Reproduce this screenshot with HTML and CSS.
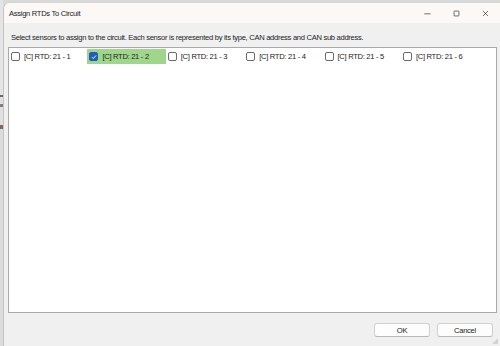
FILE: index.html
```html
<!DOCTYPE html>
<html lang="en">

<head>
    <meta charset="UTF-8">
    <title>Assign RTDs To Circuit</title>
    <link rel="stylesheet" href="styles.css">
</head>

<body>
    <div class="desktop-edge"></div>
    <div class="window">
        <div class="titlebar">
            <span class="title">Assign RTDs To Circuit</span>
            <div class="controls">
                <span class="ctl">
                    <svg width="10" height="10" viewBox="0 0 10 10"><path d="M0.5 5.5h9" stroke="#333" stroke-width="1"/></svg>
                </span>
                <span class="ctl">
                    <svg width="10" height="10" viewBox="0 0 10 10"><rect x="1.5" y="1.5" width="7" height="7" rx="1" fill="none" stroke="#333" stroke-width="1"/></svg>
                </span>
                <span class="ctl">
                    <svg width="10" height="10" viewBox="0 0 10 10"><path d="M1.5 1.5l7 7M8.5 1.5l-7 7" stroke="#333" stroke-width="1"/></svg>
                </span>
            </div>
        </div>

        <div class="content">
            <p class="hint">Select sensors to assign to the circuit. Each sensor is represented by its type, CAN address and CAN sub address.</p>

            <div class="listbox">
                <div class="item"><span class="box"></span>[C] RTD: 21 - 1</div>
                <div class="item selected"><span class="box checked">
                    <svg width="6" height="6" viewBox="0 0 6 6"><path d="M1 3.2l1.3 1.3 2.7-3" fill="none" stroke="#fff" stroke-width="0.9"/></svg>
                </span>[C] RTD: 21 - 2</div>
                <div class="item"><span class="box"></span>[C] RTD: 21 - 3</div>
                <div class="item"><span class="box"></span>[C] RTD: 21 - 4</div>
                <div class="item"><span class="box"></span>[C] RTD: 21 - 5</div>
                <div class="item"><span class="box"></span>[C] RTD: 21 - 6</div>
            </div>

            <div class="actions">
                <button type="button">OK</button>
                <button type="button">Cancel</button>
            </div>
        </div>
        <span class="grip"></span>
    </div>
</body>

</html>
```

FILE: styles.css
```css
body {
    margin: 0;
    padding: 0;
    width: 500px;
    height: 346px;
    overflow: hidden;
    display: flex;
    background-color: #d9d9d9;
    font-family: "Liberation Sans", Arial, sans-serif;
    font-size: 7.6px;
    letter-spacing: -0.3px;
    color: #222;
}

.desktop-edge {
    width: 3px;
    background: linear-gradient(#e4e4e4 0 95px, #6b6b6b 95px 97px, #e0e0e0 97px 104px, #8a7d72 104px 107px, #e0e0e0 107px 125px, #7a6a5e 125px 129px, #dcdcdc 129px);
}

.window {
    position: relative;
    flex: 1;
    margin-top: 2px;
    display: flex;
    flex-direction: column;
    background-color: #f0f0f0;
    border-left: 1px solid #c4c4c4;
    border-top: 1px solid #d6d6d6;
    border-top-left-radius: 7px;
    overflow: hidden;
}

.titlebar {
    height: 20px;
    background-color: #fbf8f5;
    display: flex;
    align-items: center;
    justify-content: space-between;
    padding-left: 5px;
}

.title {
    color: #1b1b1b;
}

.controls {
    display: flex;
    height: 100%;
}

.ctl {
    width: 29px;
    display: flex;
    align-items: center;
    justify-content: center;
}

.ctl svg {
    width: 7px;
    height: 7px;
}

.content {
    flex: 1;
    display: flex;
    flex-direction: column;
    padding: 0 3px 0 4px;
}

.hint {
    margin: 10px 0 5px 3px;
    line-height: 9px;
    white-space: nowrap;
}

.listbox {
    height: 266px;
    background-color: #fff;
    border: 1px solid #a9a9a9;
    display: flex;
    align-items: flex-start;
    padding: 1px 0 0 0;
    box-sizing: border-box;
}

.item {
    width: 78.4px;
    height: 15px;
    display: flex;
    align-items: center;
    padding-left: 2px;
    box-sizing: border-box;
    white-space: nowrap;
}

.item.selected {
    background-color: #9fd68c;
}

.box {
    width: 7px;
    height: 7px;
    border: 1px solid #6a6a6a;
    border-radius: 2px;
    background: #fff;
    margin-right: 4px;
    display: flex;
    align-items: center;
    justify-content: center;
    flex-shrink: 0;
}

.box.checked {
    background-color: #1e5fb8;
    border-color: #1e5fb8;
}

.actions {
    display: flex;
    justify-content: flex-end;
    gap: 7px;
    padding: 10px 4px 0 0;
}

button {
    width: 56px;
    height: 14px;
    padding: 0;
    font-family: inherit;
    font-size: inherit;
    letter-spacing: inherit;
    color: #222;
    background-color: #fdfdfd;
    border: 1px solid #d0d0d0;
    border-bottom-color: #b8b8b8;
    border-radius: 3px;
}

.grip {
    position: absolute;
    right: 2px;
    bottom: 2px;
    width: 6px;
    height: 6px;
    background: radial-gradient(circle, #b0b0b0 0.6px, transparent 0.8px) 0 0 / 2px 2px;
    clip-path: polygon(100% 0, 100% 100%, 0 100%);
}
```
